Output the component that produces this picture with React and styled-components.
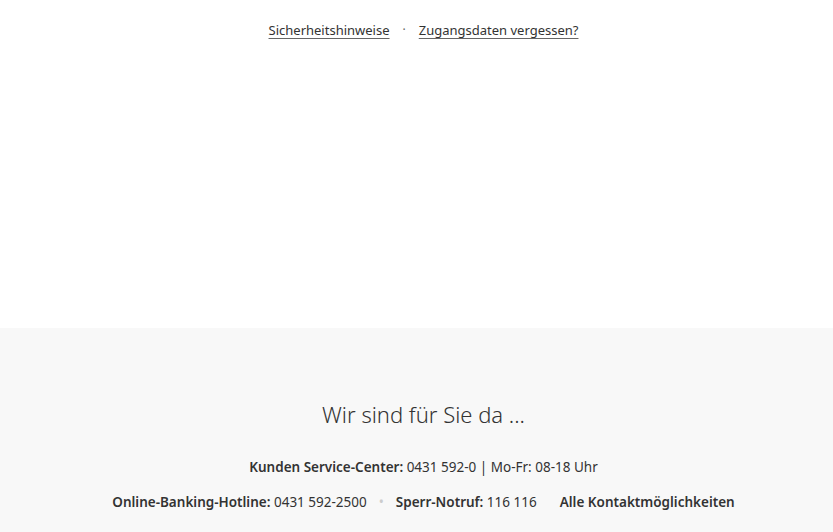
import React from "react";
import styled, { createGlobalStyle } from "styled-components";

const Global = createGlobalStyle`
  html, body { margin: 0; padding: 0; background: #fff; }
  body { font-family: "Noto Sans", "Open Sans", sans-serif; color: #333; }
`;

const Page = styled.div`
  display: flex;
  flex-direction: column;
  min-height: 532px;
  padding-left: 14px;
  box-sizing: border-box;
`;

const TopLinks = styled.nav`
  height: 328px;
  display: flex;
  justify-content: center;
  align-items: flex-start;
  padding-top: 20px;
  box-sizing: border-box;
  gap: 13px;
  font-size: 13px;
  line-height: 20px;
`;

const TopLink = styled.a`
  color: #333;
  text-decoration: underline;
  text-underline-offset: 3px;
  text-decoration-color: #666;
`;

const Sep = styled.span`
  color: #666;
  font-size: 12px;
`;

const Footer = styled.footer`
  background: #f8f8f8;
  margin-left: -14px;
  padding-left: 14px;
  flex: 1;
  display: flex;
  flex-direction: column;
  align-items: center;
  padding-top: 71px;
`;

const Heading = styled.h2`
  margin: 0;
  font-size: 22px;
  font-weight: 300;
  line-height: 30px;
  color: #333;
`;

const Row = styled.div`
  display: flex;
  align-items: center;
  justify-content: center;
  font-size: 13.5px;
  line-height: 20px;
  margin-top: ${p => p.$mt}px;
`;

const Item = styled.span`
  white-space: nowrap;
  margin-left: ${p => p.$ml || 0}px;
  b { font-weight: 600; }
`;

const Dot = styled.span`
  color: #ccc;
  margin: 0 12px 0 12px;
`;

export default function App() {
  return (
    <>
      <Global />
      <Page>
        <TopLinks>
          <TopLink href="#">Sicherheitshinweise</TopLink>
          <Sep>·</Sep>
          <TopLink href="#">Zugangsdaten vergessen?</TopLink>
        </TopLinks>
        <Footer>
          <Heading>Wir sind für Sie da ...</Heading>
          <Row $mt={28}>
            <Item><b>Kunden Service-Center:</b> 0431 592-0 | Mo-Fr: 08-18 Uhr</Item>
          </Row>
          <Row $mt={15}>
            <Item><b>Online-Banking-Hotline:</b> 0431 592-2500</Item>
            <Dot>•</Dot>
            <Item><b>Sperr-Notruf:</b> 116 116</Item>
            <Item $ml={23}><b>Alle Kontaktmöglichkeiten</b></Item>
          </Row>
        </Footer>
      </Page>
    </>
  );
}
